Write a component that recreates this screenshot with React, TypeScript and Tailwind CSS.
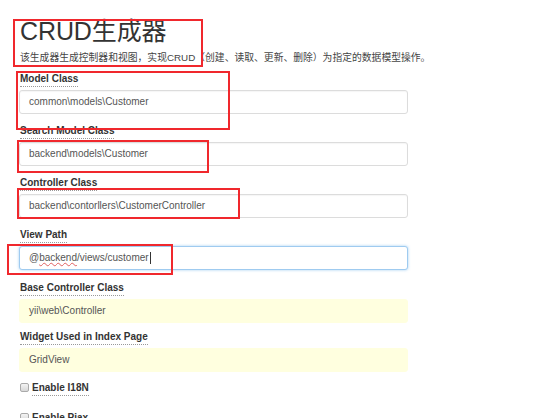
import React from "react";

const font = { fontFamily: '"Liberation Sans", Arial, "Noto Sans CJK SC", sans-serif' };

function Label({ children }: { children: React.ReactNode }) {
  return (
    <div className="h-[18px] flex items-start">
      <span className="block text-[10px] font-bold leading-[14px] text-[#333] border-b border-dotted border-[#999]">
        {children}
      </span>
    </div>
  );
}

function Field({
  label,
  value,
  variant = "normal",
  mb = "mb-[10px]",
}: {
  label: string;
  value: React.ReactNode;
  variant?: "normal" | "focus" | "yellow";
  mb?: string;
}) {
  const cls =
    variant === "focus"
      ? "border-[#9fcbf0] shadow-[0_0_3px_rgba(102,175,233,0.6)] bg-white"
      : variant === "yellow"
      ? "border-[#ffffdf] bg-[#ffffdf]"
      : "border-[#dcdcdc] bg-white shadow-[inset_0_1px_1px_rgba(0,0,0,0.04)]";
  return (
    <div className={`flex flex-col ${mb}`}>
      <Label>{label}</Label>
      <div
        className={`w-[389px] h-[24px] ml-[-1px] rounded-[3px] border ${cls} flex items-center pl-[9px] text-[10px] leading-[12px] text-[#555]`}
      >
        {value}
      </div>
    </div>
  );
}

function CheckRow({ label, underline = true, mt }: { label: string; underline?: boolean; mt: string }) {
  return (
    <div className={`flex items-start h-[14px] ${mt}`}>
      <span className="inline-block w-[9px] h-[9px] mt-[2px] rounded-[2px] border border-[#aaa] bg-gradient-to-b from-[#f4f4f4] to-[#d8d8d8] mr-[3px]" />
      <span
        className={`block text-[10px] font-bold leading-[14px] text-[#333] ${
          underline ? "border-b border-dotted border-[#999]" : ""
        }`}
      >
        {label}
      </span>
    </div>
  );
}

function RedBox({ l, t, w, h }: { l: number; t: number; w: number; h: number }) {
  return (
    <div
      className="absolute border-2 border-[#f0282d] pointer-events-none"
      style={{ left: l, top: t, width: w, height: h }}
    />
  );
}

export default function App() {
  return (
    <div className="relative w-[554px] h-[418px] overflow-hidden bg-white" style={font}>
      <div className="flex flex-col pl-[20px] pt-[17px]">
        <div className="text-[25px] leading-[28px] text-[#333] tracking-[-0.1px]">CRUD生成器</div>
        <div className="mt-[6px] text-[9.8px] leading-[14px] text-[#444] whitespace-nowrap">
          该生成器生成控制器和视图，实现CRUD（创建、读取、更新、删除）为指定的数据模型操作。
        </div>
        <div className="flex flex-col mt-[7px]">
          <Field label="Model Class" value="common\models\Customer" />
          <Field label="Search Model Class" value="backend\models\Customer" />
          <Field label="Controller Class" value="backend\contorllers\CustomerController" />
          <Field
            label="View Path"
            variant="focus"
            mb="mb-[11px]"
            value={
              <span className="flex items-center">
                @
                <span className="underline decoration-wavy decoration-[#e06060] decoration-[1px] underline-offset-[1px]">
                  backend
                </span>
                /views/customer
                <span className="inline-block w-px h-[12px] bg-[#333] ml-px" />
              </span>
            }
          />
          <Field label="Base Controller Class" value="yii\web\Controller" variant="yellow" mb="mb-[7px]" />
          <Field label="Widget Used in Index Page" value="GridView" variant="yellow" mb="mb-[9px]" />
          <CheckRow label="Enable I18N" mt="mt-0" />
          <CheckRow label="Enable Pjax" mt="mt-[16px]" />
        </div>
      </div>
      <RedBox l={13} t={19} w={190} h={48} />
      <RedBox l={16} t={71} w={214} h={59} />
      <RedBox l={17} t={140} w={192} h={33} />
      <RedBox l={17} t={188} w={223} h={31} />
      <RedBox l={7} t={244} w={166} h={31} />
    </div>
  );
}
